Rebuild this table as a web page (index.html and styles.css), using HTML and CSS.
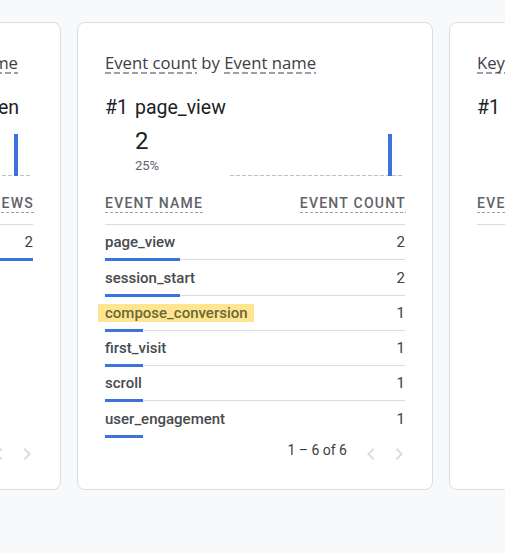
FILE: index.html
```html
<!DOCTYPE html>
<html lang="en">
<head>
<meta charset="utf-8">
<title>Event cards</title>
<link rel="stylesheet" href="styles.css">
</head>
<body>
<div class="track">
  <section class="card card--edge">
    <h2 class="card-title"><span class="dim">Views</span> by <span class="dim">Page title and screen name</span></h2>
    <div class="hero">
      <div class="hero-head"><span class="rank">#1</span><span class="hero-name">Home screen</span></div>
      <div class="hero-body">
        <div class="hero-stats"><div class="hero-value">2</div><div class="hero-pct">100%</div></div>
        <svg class="spark" width="174" height="42" viewBox="0 0 174 42"><line x1="0" y1="41.5" x2="172" y2="41.5" stroke="#bdc1c6" stroke-width="1" stroke-dasharray="4 2"/><rect x="156" y="0" width="4" height="42" fill="#3b73dd"/></svg>
      </div>
    </div>
    <div class="thead"><span class="th">Page title and screen name</span><span class="th">Views</span></div>
    <div class="row"><div class="row-line"><span class="cell-name">Home screen</span><span class="cell-val">2</span></div><div class="bar" style="width:100%"></div></div>
    <div class="pager">
      <span class="range">1 – 1 of 1</span>
      <span class="nav"><svg width="24" height="24" viewBox="0 0 24 24"><path d="M15.41 7.41L14 6l-6 6 6 6 1.41-1.41L10.83 12z"/></svg></span>
      <span class="nav"><svg width="24" height="24" viewBox="0 0 24 24"><path d="M10 6L8.59 7.41 13.17 12l-4.58 4.59L10 18l6-6z"/></svg></span>
    </div>
  </section>

  <section class="card">
    <h2 class="card-title"><span class="dim">Event count</span> by <span class="dim">Event name</span></h2>
    <div class="hero">
      <div class="hero-head"><span class="rank">#1</span><span class="hero-name">page_view</span></div>
      <div class="hero-body">
        <div class="hero-stats"><div class="hero-value">2</div><div class="hero-pct">25%</div></div>
        <svg class="spark" width="174" height="42" viewBox="0 0 174 42"><line x1="0" y1="41.5" x2="174" y2="41.5" stroke="#bdc1c6" stroke-width="1" stroke-dasharray="4 2"/><rect x="158" y="0" width="4" height="42" fill="#3b73dd"/></svg>
      </div>
    </div>
    <div class="thead"><span class="th">Event name</span><span class="th">Event count</span></div>
    <div class="row"><div class="row-line"><span class="cell-name">page_view</span><span class="cell-val">2</span></div><div class="bar" style="width:25%"></div></div>
    <div class="row"><div class="row-line"><span class="cell-name">session_start</span><span class="cell-val">2</span></div><div class="bar" style="width:25%"></div></div>
    <div class="row"><div class="row-line"><span class="cell-name"><span class="mark">compose_conversion</span></span><span class="cell-val">1</span></div><div class="bar" style="width:12.5%"></div></div>
    <div class="row"><div class="row-line"><span class="cell-name">first_visit</span><span class="cell-val">1</span></div><div class="bar" style="width:12.5%"></div></div>
    <div class="row"><div class="row-line"><span class="cell-name">scroll</span><span class="cell-val">1</span></div><div class="bar" style="width:12.5%"></div></div>
    <div class="row"><div class="row-line"><span class="cell-name">user_engagement</span><span class="cell-val">1</span></div><div class="bar" style="width:12.5%"></div></div>
    <div class="pager">
      <span class="range">1 – 6 of 6</span>
      <span class="nav"><svg width="24" height="24" viewBox="0 0 24 24"><path d="M15.41 7.41L14 6l-6 6 6 6 1.41-1.41L10.83 12z"/></svg></span>
      <span class="nav"><svg width="24" height="24" viewBox="0 0 24 24"><path d="M10 6L8.59 7.41 13.17 12l-4.58 4.59L10 18l6-6z"/></svg></span>
    </div>
  </section>

  <section class="card">
    <h2 class="card-title"><span class="dim">Key events</span> by <span class="dim">Event name</span></h2>
    <div class="hero">
      <div class="hero-head"><span class="rank">#1</span><span class="hero-name">compose_conversion</span></div>
      <div class="hero-body">
        <div class="hero-stats"><div class="hero-value">&nbsp;</div><div class="hero-pct">&nbsp;</div></div>
        <div class="spark-empty"></div>
      </div>
    </div>
    <div class="thead"><span class="th">Event name</span><span class="th">Key events</span></div>
    <div class="row-empty"></div>
  </section>
</div>
</body>
</html>
```

FILE: styles.css
```css
html, body {
  margin: 0;
  padding: 0;
}
body {
  background: #f8f9fa;
  overflow: hidden;
  font-family: Roboto, "Liberation Sans", Arial, sans-serif;
  color: #3c4043;
}
.track {
  display: flex;
  gap: 16px;
  margin-left: -295px;
  padding-top: 22px;
}
.card {
  flex: 0 0 356px;
  box-sizing: border-box;
  height: 468px;
  background: #fff;
  border: 1px solid #dadce0;
  border-radius: 8px;
  padding: 30px 27px 23px;
  display: flex;
  flex-direction: column;
}
.card-title {
  margin: 0;
  font-family: "Open Sans", Roboto, sans-serif;
  font-size: 16.7px;
  font-weight: 400;
  line-height: 20px;
  color: #3c4043;
  white-space: nowrap;
}
.dim {
  display: inline-block;
  line-height: 20px;
  padding-bottom: 1px;
  background-image: repeating-linear-gradient(90deg, #9aa0a6 0 6px, transparent 6px 9px);
  background-size: 100% 2px;
  background-position: left bottom;
  background-repeat: no-repeat;
}
.hero {
  margin-top: 22px;
}
.hero-head {
  display: flex;
  font-size: 19.5px;
  line-height: 24px;
  color: #202124;
  white-space: nowrap;
}
.rank {
  flex: 0 0 30px;
}
.hero-body {
  display: flex;
  padding-left: 30px;
  margin-top: 7px;
}
.hero-stats {
  flex: 0 0 95px;
}
.hero-value {
  font-size: 24px;
  line-height: 28px;
  color: #202124;
}
.hero-pct {
  margin-top: 3px;
  font-size: 13px;
  line-height: 16px;
  color: #5f6368;
}
.spark {
  display: block;
  margin-top: 7px;
  flex: 0 0 174px;
}
.spark-empty {
  height: 49px;
}
.thead {
  display: flex;
  justify-content: space-between;
  margin-top: 18px;
  padding-bottom: 11px;
  border-bottom: 1px solid #dadce0;
}
.th {
  display: inline-block;
  font-size: 14px;
  font-weight: 500;
  letter-spacing: 1.25px;
  line-height: 18px;
  text-transform: uppercase;
  color: #5f6368;
  white-space: nowrap;
  padding-bottom: 1px;
  background-image: repeating-linear-gradient(90deg, #9aa0a6 0 3px, transparent 3px 5px);
  background-size: 100% 1px;
  background-position: left bottom;
  background-repeat: no-repeat;
}
.thead .th:last-child {
  margin-right: -1px;
}
.row {
  border-top: 1px solid #dadce0;
  padding-top: 7.3px;
}
.thead + .row {
  border-top: 0;
}
.row-line {
  display: flex;
  justify-content: space-between;
  font-size: 15px;
  line-height: 20px;
  white-space: nowrap;
}
.cell-name {
  font-weight: 500;
  color: #474a4e;
}
.cell-val {
  color: #3c4043;
}
.mark {
  background: #fde68f;
  color: #6e6639;
  padding: 0 6px 0 7px;
  margin-left: -7px;
}
.bar {
  position: relative;
  height: 3px;
  margin-top: 6px;
  margin-bottom: -2px;
  background: #3b73dd;
}
.pager {
  display: flex;
  align-items: flex-start;
  justify-content: flex-end;
  margin-top: auto;
  margin-right: -6px;
}
.range {
  font-size: 14px;
  line-height: 20px;
  color: #3c4043;
  margin-right: 8px;
}
.nav {
  display: block;
  width: 24px;
  height: 24px;
  margin-top: 2px;
  margin-left: 4px;
}
.nav:first-of-type {
  margin-left: 0;
}
.nav svg {
  display: block;
  fill: #dadce0;
}
.card--edge .card-title {
  text-align: right;
  padding-right: 15px;
}
.card--edge .hero-head {
  justify-content: flex-end;
  padding-right: 14px;
}
.card--edge .rank {
  flex: 0 0 auto;
  margin-right: 10px;
}
```
